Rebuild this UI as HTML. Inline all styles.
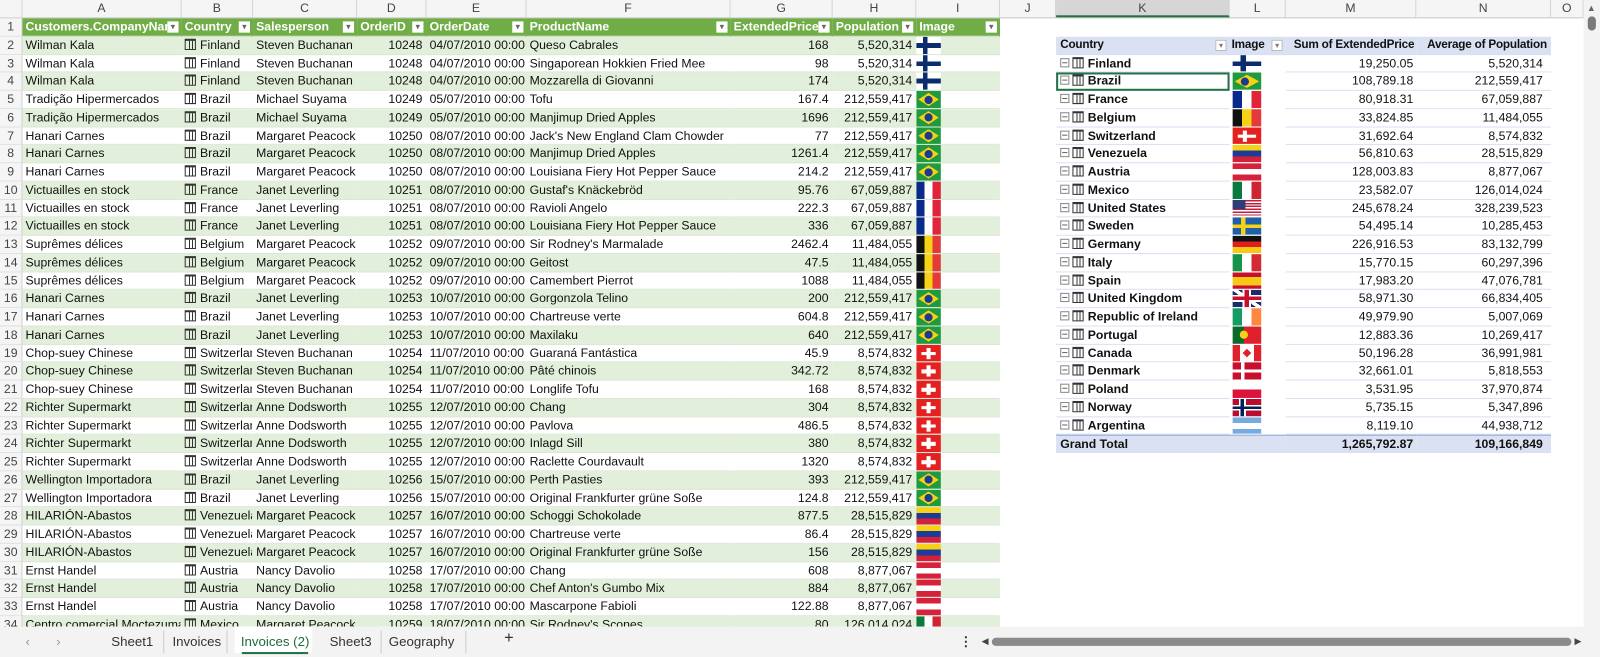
<!DOCTYPE html>
<html><head><meta charset="utf-8"><style>
body{margin:0;width:1600px;height:657px;overflow:hidden;background:#fff;font:12px "Liberation Sans",sans-serif;color:#111;position:relative}
#W{position:absolute;left:0;top:0;width:1568px;height:644px;transform:scale(1.0204);transform-origin:0 0;overflow:hidden}
.ch{position:absolute;top:0;left:0;height:18px;display:flex;background:#f5f5f5;border-bottom:1px solid #c8c8c8;box-sizing:border-box}
.ch span{box-sizing:border-box;text-align:center;border-right:1px solid #d4d4d4;color:#444;line-height:17px;font-size:12px}
#L{position:absolute;top:18px;left:0;width:980px}
.r{display:flex;height:17.75px;line-height:17px}
.r span{box-sizing:border-box;overflow:hidden;white-space:nowrap;padding:0 3px;border-bottom:1px solid #dde6d6;border-right:1px solid transparent}
.r span.n{width:22px;background:#f5f5f5;color:#444;text-align:center;padding:0;border-right:1px solid #d0d0d0;border-bottom:1px solid #e0e0e0}
.g span{background:#e2efda}.g span.n{background:#f5f5f5}
.h span{background:#70ad47;color:#fff;font-weight:bold;position:relative}
.h span.n{background:#f5f5f5;color:#444;font-weight:normal}
.h span:not(.n)::after{content:"▾";position:absolute;right:2px;top:3px;width:11px;height:11px;background:#fff;color:#666;font-size:9px;line-height:11px;text-align:center;font-weight:normal}
.a{width:156px}.b{width:70px}.c{width:102px}.d{width:68px;text-align:right}.e{width:98px}.f{width:200px}.gg{width:100px;text-align:right}.hh{width:82px;text-align:right}.i{width:82px;padding:0!important}
.m{display:inline-block;width:9px;height:8px;border:1px solid #333;border-top-width:2px;margin-right:4px;vertical-align:-1px;background:linear-gradient(to right,transparent 3px,#333 3px,#333 4px,transparent 4px,transparent 6px,#333 6px,#333 7px,transparent 7px)}
.fl{display:inline-block;width:24px;height:17px;vertical-align:top;position:relative;overflow:hidden}
.fi{background:linear-gradient(to right,transparent 28%,#0b2d6e 28%,#0b2d6e 46%,transparent 46%),linear-gradient(#fff 36%,#0b2d6e 36%,#0b2d6e 64%,#fff 64%)}
.br{background:#1f9a3e}.br::before{content:"";position:absolute;left:2px;top:2px;right:2px;bottom:2px;background:#f7d116;clip-path:polygon(50% 0,100% 50%,50% 100%,0 50%)}.br::after{content:"";position:absolute;left:8px;top:4.5px;width:8px;height:8px;border-radius:50%;background:#1a3c8c}
.fr{background:linear-gradient(to right,#0a2a8a 33%,#fff 33%,#fff 66%,#e0243a 66%)}
.be{background:linear-gradient(to right,#111 33%,#f7d116 33%,#f7d116 66%,#e43a3a 66%)}
.sw{background:#e52020}.sw::before{content:"";position:absolute;left:10px;width:4px;top:3px;bottom:3px;background:#fff}
.sw::after{content:"";position:absolute;left:5px;right:5px;top:7px;height:3.5px;background:#fff}
.ve{background:linear-gradient(#f6d116 33%,#1e3c96 33%,#1e3c96 66%,#d4203a 66%)}
.at{background:linear-gradient(#d7213a 33%,#fff 33%,#fff 66%,#d7213a 66%)}
.mx{background:linear-gradient(to right,#0b7a3e 33%,#fff 33%,#fff 66%,#cf2532 66%)}
.us{background:linear-gradient(to right,#2c3d7a 45%,transparent 45%) top/100% 55% no-repeat,repeating-linear-gradient(#c0203a 0,#c0203a 1.4px,#fff 1.4px,#fff 2.8px)}
.se{background:linear-gradient(to right,transparent 30%,#f7d116 30%,#f7d116 45%,transparent 45%),linear-gradient(#1e5fa8 40%,#f7d116 40%,#f7d116 60%,#1e5fa8 60%)}
.de{background:linear-gradient(#111 33%,#dd1f1f 33%,#dd1f1f 66%,#f7c916 66%)}
.it{background:linear-gradient(to right,#16924a 33%,#fff 33%,#fff 66%,#d42a35 66%)}
.es{background:linear-gradient(#c8102e 25%,#f7c916 25%,#f7c916 75%,#c8102e 75%)}
.gb{background:linear-gradient(transparent 40%,#c8102e 40%,#c8102e 60%,transparent 60%),linear-gradient(to right,transparent 42%,#c8102e 42%,#c8102e 58%,transparent 58%),linear-gradient(transparent 30%,#fff 30%,#fff 70%,transparent 70%),linear-gradient(to right,transparent 35%,#fff 35%,#fff 65%,transparent 65%),linear-gradient(35deg,#1b2c6b 44%,#fff 44%,#fff 56%,#1b2c6b 56%)}
.ie{background:linear-gradient(to right,#169b62 33%,#fff 33%,#fff 66%,#ff883e 66%)}
.pt{background:linear-gradient(to right,#0a6a2a 40%,#e0202a 40%)}
.pt::after{content:"";position:absolute;left:7px;top:4px;width:8px;height:8px;border-radius:50%;background:#f7d116}
.ca{background:linear-gradient(to right,#e0202a 25%,#fff 25%,#fff 75%,#e0202a 75%)}
.ca::after{content:"";position:absolute;left:11px;top:5px;width:6px;height:6px;background:#e0202a;transform:rotate(45deg)}
.dk{background:linear-gradient(to right,transparent 30%,#fff 30%,#fff 42%,transparent 42%),linear-gradient(#c8102e 42%,#fff 42%,#fff 58%,#c8102e 58%)}
.pl{background:linear-gradient(#fff 50%,#dc143c 50%)}
.no{background:linear-gradient(to right,transparent 28%,#00205b 28%,#00205b 40%,transparent 40%),linear-gradient(transparent 42%,#00205b 42%,#00205b 58%,transparent 58%),linear-gradient(to right,transparent 22%,#fff 22%,#fff 46%,transparent 46%),linear-gradient(#ba0c2f 34%,#fff 34%,#fff 66%,#ba0c2f 66%)}
.ar{background:linear-gradient(#74acdf 33%,#fff 33%,#fff 66%,#74acdf 66%)}
#P{position:absolute;left:1035px;top:35.75px;width:485px}
.p{display:flex;height:17.75px;line-height:17px}
.p span{box-sizing:border-box;white-space:nowrap;overflow:hidden;border-bottom:1px solid #d9e1f2;padding:0 3px}
.p .k{width:170px;font-weight:bold;padding-left:4px}.p .l{width:55px;padding:0 3px;border-bottom-color:transparent}.p .mm{width:128px;text-align:right}.p .nn{width:132px;text-align:right;padding-right:8px}
.p .fl{width:28px}
.mi{display:inline-block;width:7px;height:7px;border:1px solid #888;margin-right:3px;vertical-align:0;position:relative;font-size:0}
.mi::after{content:"";position:absolute;left:1px;right:1px;top:3px;height:1px;background:#666}
.ph span{background:#d9e1f2;font-weight:bold;position:relative;overflow:visible;font-size:11.5px;letter-spacing:-0.2px}
.ph .fb::after{content:"▾";position:absolute;right:3px;top:3px;width:11px;height:11px;background:#fff;border:1px solid #bbb;box-sizing:border-box;color:#777;font-size:8px;line-height:10px;text-align:center;font-weight:normal}
.gt span{background:#d9e1f2;font-weight:bold;border-top:1px solid #8ea9db;border-bottom:none}
.sel{outline:2px solid #217346;outline-offset:-2px}
#tabs{position:absolute;left:0;top:614px;width:1568px;height:30px;background:#f3f3f3;font-size:13px;color:#333}
#tabs span{position:absolute;top:7px}
</style></head><body><div id="W">
<div class="ch">
<span style="width:22px;background:#f5f5f5"></span><span style="width:156px">A</span><span style="width:70px">B</span><span style="width:102px">C</span><span style="width:68px">D</span><span style="width:98px">E</span><span style="width:200px">F</span><span style="width:100px">G</span><span style="width:82px">H</span><span style="width:82px">I</span><span style="width:55px">J</span><span style="width:170px;background:#d6d6d6;border-bottom:2px solid #217346">K</span><span style="width:55px">L</span><span style="width:128px">M</span><span style="width:132px">N</span><span style="width:32px">O</span>
</div>
<div id="L">
<div class="r h"><span class="n">1</span><span class="a">Customers.CompanyNam</span><span class="b">Country</span><span class="c">Salesperson</span><span class="d" style="text-align:left">OrderID</span><span class="e">OrderDate</span><span class="f">ProductName</span><span class="gg" style="text-align:left">ExtendedPrice</span><span class="hh" style="text-align:left">Population</span><span class="i" style="padding:0 3px!important">Image</span></div>
<div class="r g"><span class="n">2</span><span class="a">Wilman Kala</span><span class="b"><i class="m"></i>Finland</span><span class="c">Steven Buchanan</span><span class="d">10248</span><span class="e">04/07/2010 00:00</span><span class="f">Queso Cabrales</span><span class="gg">168</span><span class="hh">5,520,314</span><span class="i"><i class="fl fi"></i></span></div>
<div class="r"><span class="n">3</span><span class="a">Wilman Kala</span><span class="b"><i class="m"></i>Finland</span><span class="c">Steven Buchanan</span><span class="d">10248</span><span class="e">04/07/2010 00:00</span><span class="f">Singaporean Hokkien Fried Mee</span><span class="gg">98</span><span class="hh">5,520,314</span><span class="i"><i class="fl fi"></i></span></div>
<div class="r g"><span class="n">4</span><span class="a">Wilman Kala</span><span class="b"><i class="m"></i>Finland</span><span class="c">Steven Buchanan</span><span class="d">10248</span><span class="e">04/07/2010 00:00</span><span class="f">Mozzarella di Giovanni</span><span class="gg">174</span><span class="hh">5,520,314</span><span class="i"><i class="fl fi"></i></span></div>
<div class="r"><span class="n">5</span><span class="a">Tradição Hipermercados</span><span class="b"><i class="m"></i>Brazil</span><span class="c">Michael Suyama</span><span class="d">10249</span><span class="e">05/07/2010 00:00</span><span class="f">Tofu</span><span class="gg">167.4</span><span class="hh">212,559,417</span><span class="i"><i class="fl br"></i></span></div>
<div class="r g"><span class="n">6</span><span class="a">Tradição Hipermercados</span><span class="b"><i class="m"></i>Brazil</span><span class="c">Michael Suyama</span><span class="d">10249</span><span class="e">05/07/2010 00:00</span><span class="f">Manjimup Dried Apples</span><span class="gg">1696</span><span class="hh">212,559,417</span><span class="i"><i class="fl br"></i></span></div>
<div class="r"><span class="n">7</span><span class="a">Hanari Carnes</span><span class="b"><i class="m"></i>Brazil</span><span class="c">Margaret Peacock</span><span class="d">10250</span><span class="e">08/07/2010 00:00</span><span class="f">Jack's New England Clam Chowder</span><span class="gg">77</span><span class="hh">212,559,417</span><span class="i"><i class="fl br"></i></span></div>
<div class="r g"><span class="n">8</span><span class="a">Hanari Carnes</span><span class="b"><i class="m"></i>Brazil</span><span class="c">Margaret Peacock</span><span class="d">10250</span><span class="e">08/07/2010 00:00</span><span class="f">Manjimup Dried Apples</span><span class="gg">1261.4</span><span class="hh">212,559,417</span><span class="i"><i class="fl br"></i></span></div>
<div class="r"><span class="n">9</span><span class="a">Hanari Carnes</span><span class="b"><i class="m"></i>Brazil</span><span class="c">Margaret Peacock</span><span class="d">10250</span><span class="e">08/07/2010 00:00</span><span class="f">Louisiana Fiery Hot Pepper Sauce</span><span class="gg">214.2</span><span class="hh">212,559,417</span><span class="i"><i class="fl br"></i></span></div>
<div class="r g"><span class="n">10</span><span class="a">Victuailles en stock</span><span class="b"><i class="m"></i>France</span><span class="c">Janet Leverling</span><span class="d">10251</span><span class="e">08/07/2010 00:00</span><span class="f">Gustaf's Knäckebröd</span><span class="gg">95.76</span><span class="hh">67,059,887</span><span class="i"><i class="fl fr"></i></span></div>
<div class="r"><span class="n">11</span><span class="a">Victuailles en stock</span><span class="b"><i class="m"></i>France</span><span class="c">Janet Leverling</span><span class="d">10251</span><span class="e">08/07/2010 00:00</span><span class="f">Ravioli Angelo</span><span class="gg">222.3</span><span class="hh">67,059,887</span><span class="i"><i class="fl fr"></i></span></div>
<div class="r g"><span class="n">12</span><span class="a">Victuailles en stock</span><span class="b"><i class="m"></i>France</span><span class="c">Janet Leverling</span><span class="d">10251</span><span class="e">08/07/2010 00:00</span><span class="f">Louisiana Fiery Hot Pepper Sauce</span><span class="gg">336</span><span class="hh">67,059,887</span><span class="i"><i class="fl fr"></i></span></div>
<div class="r"><span class="n">13</span><span class="a">Suprêmes délices</span><span class="b"><i class="m"></i>Belgium</span><span class="c">Margaret Peacock</span><span class="d">10252</span><span class="e">09/07/2010 00:00</span><span class="f">Sir Rodney's Marmalade</span><span class="gg">2462.4</span><span class="hh">11,484,055</span><span class="i"><i class="fl be"></i></span></div>
<div class="r g"><span class="n">14</span><span class="a">Suprêmes délices</span><span class="b"><i class="m"></i>Belgium</span><span class="c">Margaret Peacock</span><span class="d">10252</span><span class="e">09/07/2010 00:00</span><span class="f">Geitost</span><span class="gg">47.5</span><span class="hh">11,484,055</span><span class="i"><i class="fl be"></i></span></div>
<div class="r"><span class="n">15</span><span class="a">Suprêmes délices</span><span class="b"><i class="m"></i>Belgium</span><span class="c">Margaret Peacock</span><span class="d">10252</span><span class="e">09/07/2010 00:00</span><span class="f">Camembert Pierrot</span><span class="gg">1088</span><span class="hh">11,484,055</span><span class="i"><i class="fl be"></i></span></div>
<div class="r g"><span class="n">16</span><span class="a">Hanari Carnes</span><span class="b"><i class="m"></i>Brazil</span><span class="c">Janet Leverling</span><span class="d">10253</span><span class="e">10/07/2010 00:00</span><span class="f">Gorgonzola Telino</span><span class="gg">200</span><span class="hh">212,559,417</span><span class="i"><i class="fl br"></i></span></div>
<div class="r"><span class="n">17</span><span class="a">Hanari Carnes</span><span class="b"><i class="m"></i>Brazil</span><span class="c">Janet Leverling</span><span class="d">10253</span><span class="e">10/07/2010 00:00</span><span class="f">Chartreuse verte</span><span class="gg">604.8</span><span class="hh">212,559,417</span><span class="i"><i class="fl br"></i></span></div>
<div class="r g"><span class="n">18</span><span class="a">Hanari Carnes</span><span class="b"><i class="m"></i>Brazil</span><span class="c">Janet Leverling</span><span class="d">10253</span><span class="e">10/07/2010 00:00</span><span class="f">Maxilaku</span><span class="gg">640</span><span class="hh">212,559,417</span><span class="i"><i class="fl br"></i></span></div>
<div class="r"><span class="n">19</span><span class="a">Chop-suey Chinese</span><span class="b"><i class="m"></i>Switzerland</span><span class="c">Steven Buchanan</span><span class="d">10254</span><span class="e">11/07/2010 00:00</span><span class="f">Guaraná Fantástica</span><span class="gg">45.9</span><span class="hh">8,574,832</span><span class="i"><i class="fl sw"></i></span></div>
<div class="r g"><span class="n">20</span><span class="a">Chop-suey Chinese</span><span class="b"><i class="m"></i>Switzerland</span><span class="c">Steven Buchanan</span><span class="d">10254</span><span class="e">11/07/2010 00:00</span><span class="f">Pâté chinois</span><span class="gg">342.72</span><span class="hh">8,574,832</span><span class="i"><i class="fl sw"></i></span></div>
<div class="r"><span class="n">21</span><span class="a">Chop-suey Chinese</span><span class="b"><i class="m"></i>Switzerland</span><span class="c">Steven Buchanan</span><span class="d">10254</span><span class="e">11/07/2010 00:00</span><span class="f">Longlife Tofu</span><span class="gg">168</span><span class="hh">8,574,832</span><span class="i"><i class="fl sw"></i></span></div>
<div class="r g"><span class="n">22</span><span class="a">Richter Supermarkt</span><span class="b"><i class="m"></i>Switzerland</span><span class="c">Anne Dodsworth</span><span class="d">10255</span><span class="e">12/07/2010 00:00</span><span class="f">Chang</span><span class="gg">304</span><span class="hh">8,574,832</span><span class="i"><i class="fl sw"></i></span></div>
<div class="r"><span class="n">23</span><span class="a">Richter Supermarkt</span><span class="b"><i class="m"></i>Switzerland</span><span class="c">Anne Dodsworth</span><span class="d">10255</span><span class="e">12/07/2010 00:00</span><span class="f">Pavlova</span><span class="gg">486.5</span><span class="hh">8,574,832</span><span class="i"><i class="fl sw"></i></span></div>
<div class="r g"><span class="n">24</span><span class="a">Richter Supermarkt</span><span class="b"><i class="m"></i>Switzerland</span><span class="c">Anne Dodsworth</span><span class="d">10255</span><span class="e">12/07/2010 00:00</span><span class="f">Inlagd Sill</span><span class="gg">380</span><span class="hh">8,574,832</span><span class="i"><i class="fl sw"></i></span></div>
<div class="r"><span class="n">25</span><span class="a">Richter Supermarkt</span><span class="b"><i class="m"></i>Switzerland</span><span class="c">Anne Dodsworth</span><span class="d">10255</span><span class="e">12/07/2010 00:00</span><span class="f">Raclette Courdavault</span><span class="gg">1320</span><span class="hh">8,574,832</span><span class="i"><i class="fl sw"></i></span></div>
<div class="r g"><span class="n">26</span><span class="a">Wellington Importadora</span><span class="b"><i class="m"></i>Brazil</span><span class="c">Janet Leverling</span><span class="d">10256</span><span class="e">15/07/2010 00:00</span><span class="f">Perth Pasties</span><span class="gg">393</span><span class="hh">212,559,417</span><span class="i"><i class="fl br"></i></span></div>
<div class="r"><span class="n">27</span><span class="a">Wellington Importadora</span><span class="b"><i class="m"></i>Brazil</span><span class="c">Janet Leverling</span><span class="d">10256</span><span class="e">15/07/2010 00:00</span><span class="f">Original Frankfurter grüne Soße</span><span class="gg">124.8</span><span class="hh">212,559,417</span><span class="i"><i class="fl br"></i></span></div>
<div class="r g"><span class="n">28</span><span class="a">HILARIÓN-Abastos</span><span class="b"><i class="m"></i>Venezuela</span><span class="c">Margaret Peacock</span><span class="d">10257</span><span class="e">16/07/2010 00:00</span><span class="f">Schoggi Schokolade</span><span class="gg">877.5</span><span class="hh">28,515,829</span><span class="i"><i class="fl ve"></i></span></div>
<div class="r"><span class="n">29</span><span class="a">HILARIÓN-Abastos</span><span class="b"><i class="m"></i>Venezuela</span><span class="c">Margaret Peacock</span><span class="d">10257</span><span class="e">16/07/2010 00:00</span><span class="f">Chartreuse verte</span><span class="gg">86.4</span><span class="hh">28,515,829</span><span class="i"><i class="fl ve"></i></span></div>
<div class="r g"><span class="n">30</span><span class="a">HILARIÓN-Abastos</span><span class="b"><i class="m"></i>Venezuela</span><span class="c">Margaret Peacock</span><span class="d">10257</span><span class="e">16/07/2010 00:00</span><span class="f">Original Frankfurter grüne Soße</span><span class="gg">156</span><span class="hh">28,515,829</span><span class="i"><i class="fl ve"></i></span></div>
<div class="r"><span class="n">31</span><span class="a">Ernst Handel</span><span class="b"><i class="m"></i>Austria</span><span class="c">Nancy Davolio</span><span class="d">10258</span><span class="e">17/07/2010 00:00</span><span class="f">Chang</span><span class="gg">608</span><span class="hh">8,877,067</span><span class="i"><i class="fl at"></i></span></div>
<div class="r g"><span class="n">32</span><span class="a">Ernst Handel</span><span class="b"><i class="m"></i>Austria</span><span class="c">Nancy Davolio</span><span class="d">10258</span><span class="e">17/07/2010 00:00</span><span class="f">Chef Anton's Gumbo Mix</span><span class="gg">884</span><span class="hh">8,877,067</span><span class="i"><i class="fl at"></i></span></div>
<div class="r"><span class="n">33</span><span class="a">Ernst Handel</span><span class="b"><i class="m"></i>Austria</span><span class="c">Nancy Davolio</span><span class="d">10258</span><span class="e">17/07/2010 00:00</span><span class="f">Mascarpone Fabioli</span><span class="gg">122.88</span><span class="hh">8,877,067</span><span class="i"><i class="fl at"></i></span></div>
<div class="r g"><span class="n">34</span><span class="a">Centro comercial Moctezuma</span><span class="b"><i class="m"></i>Mexico</span><span class="c">Margaret Peacock</span><span class="d">10259</span><span class="e">18/07/2010 00:00</span><span class="f">Sir Rodney's Scones</span><span class="gg">80</span><span class="hh">126,014,024</span><span class="i"><i class="fl mx"></i></span></div>
</div>

<div id="P">
<div class="p ph"><span class="k fb">Country</span><span class="l fb" style="border-bottom-color:#d9e1f2;padding-left:2px">Image</span><span class="mm" style="padding:0 2px">Sum of ExtendedPrice</span><span class="nn" style="padding:0 4px">Average of Population</span></div>
<div class="p"><span class="k"><i class="mi"></i><i class="m"></i>Finland</span><span class="l"><i class="fl fi"></i></span><span class="mm">19,250.05</span><span class="nn">5,520,314</span></div>
<div class="p"><span class="k sel"><i class="mi"></i><i class="m"></i>Brazil</span><span class="l"><i class="fl br"></i></span><span class="mm">108,789.18</span><span class="nn">212,559,417</span></div>
<div class="p"><span class="k"><i class="mi"></i><i class="m"></i>France</span><span class="l"><i class="fl fr"></i></span><span class="mm">80,918.31</span><span class="nn">67,059,887</span></div>
<div class="p"><span class="k"><i class="mi"></i><i class="m"></i>Belgium</span><span class="l"><i class="fl be"></i></span><span class="mm">33,824.85</span><span class="nn">11,484,055</span></div>
<div class="p"><span class="k"><i class="mi"></i><i class="m"></i>Switzerland</span><span class="l"><i class="fl sw"></i></span><span class="mm">31,692.64</span><span class="nn">8,574,832</span></div>
<div class="p"><span class="k"><i class="mi"></i><i class="m"></i>Venezuela</span><span class="l"><i class="fl ve"></i></span><span class="mm">56,810.63</span><span class="nn">28,515,829</span></div>
<div class="p"><span class="k"><i class="mi"></i><i class="m"></i>Austria</span><span class="l"><i class="fl at"></i></span><span class="mm">128,003.83</span><span class="nn">8,877,067</span></div>
<div class="p"><span class="k"><i class="mi"></i><i class="m"></i>Mexico</span><span class="l"><i class="fl mx"></i></span><span class="mm">23,582.07</span><span class="nn">126,014,024</span></div>
<div class="p"><span class="k"><i class="mi"></i><i class="m"></i>United States</span><span class="l"><i class="fl us"></i></span><span class="mm">245,678.24</span><span class="nn">328,239,523</span></div>
<div class="p"><span class="k"><i class="mi"></i><i class="m"></i>Sweden</span><span class="l"><i class="fl se"></i></span><span class="mm">54,495.14</span><span class="nn">10,285,453</span></div>
<div class="p"><span class="k"><i class="mi"></i><i class="m"></i>Germany</span><span class="l"><i class="fl de"></i></span><span class="mm">226,916.53</span><span class="nn">83,132,799</span></div>
<div class="p"><span class="k"><i class="mi"></i><i class="m"></i>Italy</span><span class="l"><i class="fl it"></i></span><span class="mm">15,770.15</span><span class="nn">60,297,396</span></div>
<div class="p"><span class="k"><i class="mi"></i><i class="m"></i>Spain</span><span class="l"><i class="fl es"></i></span><span class="mm">17,983.20</span><span class="nn">47,076,781</span></div>
<div class="p"><span class="k"><i class="mi"></i><i class="m"></i>United Kingdom</span><span class="l"><i class="fl gb"></i></span><span class="mm">58,971.30</span><span class="nn">66,834,405</span></div>
<div class="p"><span class="k"><i class="mi"></i><i class="m"></i>Republic of Ireland</span><span class="l"><i class="fl ie"></i></span><span class="mm">49,979.90</span><span class="nn">5,007,069</span></div>
<div class="p"><span class="k"><i class="mi"></i><i class="m"></i>Portugal</span><span class="l"><i class="fl pt"></i></span><span class="mm">12,883.36</span><span class="nn">10,269,417</span></div>
<div class="p"><span class="k"><i class="mi"></i><i class="m"></i>Canada</span><span class="l"><i class="fl ca"></i></span><span class="mm">50,196.28</span><span class="nn">36,991,981</span></div>
<div class="p"><span class="k"><i class="mi"></i><i class="m"></i>Denmark</span><span class="l"><i class="fl dk"></i></span><span class="mm">32,661.01</span><span class="nn">5,818,553</span></div>
<div class="p"><span class="k"><i class="mi"></i><i class="m"></i>Poland</span><span class="l"><i class="fl pl"></i></span><span class="mm">3,531.95</span><span class="nn">37,970,874</span></div>
<div class="p"><span class="k"><i class="mi"></i><i class="m"></i>Norway</span><span class="l"><i class="fl no"></i></span><span class="mm">5,735.15</span><span class="nn">5,347,896</span></div>
<div class="p"><span class="k"><i class="mi"></i><i class="m"></i>Argentina</span><span class="l"><i class="fl ar"></i></span><span class="mm">8,119.10</span><span class="nn">44,938,712</span></div>
<div class="p gt"><span class="k">Grand Total</span><span class="l"></span><span class="mm">1,265,792.87</span><span class="nn">109,166,849</span></div>
</div>

<div style="position:absolute;left:1552px;top:0;width:16px;height:614px;background:#f3f3f3"></div>
<div style="position:absolute;left:1555px;top:3px;color:#666;font-size:9px">▲</div>
<div style="position:absolute;left:1556px;top:16px;width:8px;height:14px;border-radius:4px;background:#7a7a7a"></div>

<div id="tabs">
<span style="left:25px;color:#999">&lsaquo;</span><span style="left:55px;color:#999">&rsaquo;</span>
<span style="left:109px">Sheet1</span><span style="left:160px;top:4px;height:22px;border-left:1px solid #ccc"></span>
<span style="left:169px">Invoices</span><span style="left:222px;top:4px;height:22px;border-left:1px solid #ccc"></span>
<span style="left:230px;width:76px;height:26px;top:0;background:#fff"></span>
<span style="left:236px;color:#1e6b3c">Invoices (2)</span><span style="left:237px;top:25px;width:65px;height:2px;background:#217346"></span>
<span style="left:323px">Sheet3</span><span style="left:373px;top:4px;height:22px;border-left:1px solid #ccc"></span>
<span style="left:381px">Geography</span><span style="left:456px;top:4px;height:22px;border-left:1px solid #ccc"></span>
<span style="left:494px;font-size:16px;top:3px">+</span>
<span style="left:940px;font-weight:bold">⋮</span>
<span style="left:962px;top:9px;font-size:9px;color:#444">◀</span>
<span style="left:972px;top:11px;width:568px;height:8px;border-radius:4px;background:#8a8a8a"></span>
<span style="left:1543px;top:9px;font-size:9px;color:#444">▶</span>
</div>
</div></body></html>
